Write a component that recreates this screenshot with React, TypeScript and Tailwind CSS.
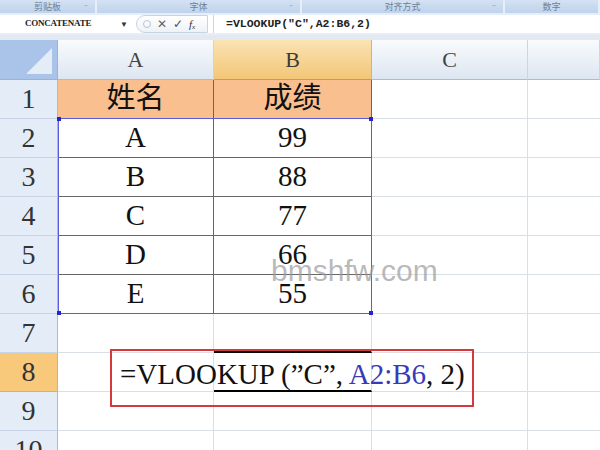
import React from "react";

const serif = { fontFamily: '"Liberation Serif", "Noto Sans CJK SC", serif' };

const rows = [
  { n: "1", a: "姓名", b: "成绩", head: true },
  { n: "2", a: "A", b: "99" },
  { n: "3", a: "B", b: "88" },
  { n: "4", a: "C", b: "77" },
  { n: "5", a: "D", b: "66" },
  { n: "6", a: "E", b: "55" },
  { n: "7" },
  { n: "8", active: true },
  { n: "9" },
  { n: "10" },
];

function RibbonGroups() {
  const groups = [
    { label: "剪贴板", w: "w-[97px]" },
    { label: "字体", w: "w-[205px]" },
    { label: "对齐方式", w: "w-[203px]" },
    { label: "数字", w: "flex-1" },
  ];
  return (
    <div className="flex h-[13px] bg-gradient-to-b from-[#d4e2f3] to-[#bfd3ec]">
      {groups.map((g, i) => (
        <div
          key={i}
          className={`${g.w} relative flex items-center justify-center border-r-2 border-[#e6eef8] text-[9px] leading-none text-[#6d7f99]`}
          style={{ fontFamily: '"Noto Sans CJK SC", sans-serif' }}
        >
          {g.label}
          {i < 3 && <span className="absolute right-[7px] top-[2px] text-[6px] text-[#8ea3bd]">⌐</span>}
        </div>
      ))}
    </div>
  );
}

function FormulaBar() {
  return (
    <div className="flex h-[22px] items-center border-t-2 border-b-2 border-[#e7eef7] bg-white">
      <div className="w-[120px] pl-[25px] text-[9px] font-bold tracking-tight text-[#222]" style={serif}>
        CONCATENATE
      </div>
      <span className="w-[16px] text-[8px] text-[#333]">▼</span>
      <div className="flex h-[18px] w-[72px] items-center gap-[6px] rounded-l-full border border-[#c8d4e2] bg-gradient-to-b from-white to-[#eef2f7] pl-[6px]">
        <span className="h-[8px] w-[8px] rounded-full border border-[#b8c4d2]" />
        <span className="text-[12px] leading-none text-[#5a6470]">✕</span>
        <span className="text-[12px] leading-none text-[#4a5560]">✓</span>
        <span className="text-[11px] italic leading-none text-[#333]" style={serif}>
          f<sub className="text-[7px]">x</sub>
        </span>
      </div>
      <div
        className="ml-[5px] border-l border-[#c8d4e2] pl-[12px] text-[11.5px] font-semibold text-[#222]"
        style={{ fontFamily: '"Liberation Mono", monospace' }}
      >
        =VLOOKUP("C",A2:B6,2)
      </div>
    </div>
  );
}

export default function App() {
  return (
    <div className="relative h-[450px] w-[600px] overflow-hidden bg-white">
      <RibbonGroups />
      <FormulaBar />
      <div className="h-[5px] bg-[#e3e9f1]" />

      {/* sheet grid */}
      <div className="relative grid grid-cols-[58px_156px_158px_156px_1fr] grid-rows-[40px_repeat(10,39px)]" style={serif}>
        {/* corner */}
        <div className="relative border-r border-b border-[#9db3cd] bg-[#a9c4e8]">
          <svg className="absolute bottom-[3px] right-[3px]" width="32" height="30">
            <polygon points="30,2 30,28 4,28" fill="#e4ecf7" />
          </svg>
        </div>
        {["A", "B", "C", ""].map((c) => (
          <div
            key={c || "D"}
            className={`flex items-center justify-center border-r border-b text-[22px] ${
              c === "B"
                ? "border-[#e2b063] border-b-[#c69b52] bg-gradient-to-b from-[#fae3b4] to-[#f3c676] text-[#3b3b3b]"
                : "border-[#c9d6e6] border-b-[#a9bcd3] bg-gradient-to-b from-[#f9fbfd] to-[#dde6f1] text-[#444]"
            }`}
          >
            {c}
          </div>
        ))}

        {rows.map((r) => (
          <React.Fragment key={r.n}>
            <div
              className={`flex items-center justify-center border-r border-b text-[28px] ${
                r.active
                  ? "border-[#e0b060] bg-[#f8c97a] text-[#333]"
                  : "border-[#c6d4e6] border-r-[#a9bcd3] bg-[#e4ecf7] text-[#333]"
              }`}
            >
              {r.n}
            </div>
            <div
              className={`flex items-center justify-center border-r border-b text-[29px] text-[#111] ${
                r.a ? "border-[#666]" : "border-[#dadee5]"
              } ${r.head ? "bg-[#f9bf8f]" : ""}`}
            >
              {r.a}
            </div>
            <div
              className={`flex items-center justify-center border-r border-b text-[29px] text-[#111] ${
                r.b ? "border-[#666]" : r.active ? "border-r-[#dadee5] border-b-black border-b-2" : "border-[#dadee5]"
              } ${r.head ? "bg-[#f9bf8f]" : ""} ${r.n === "7" ? "border-b-black border-b-2" : ""}`}
            >
              {r.b}
            </div>
            <div className="border-r border-b border-[#dadee5]" />
            <div className="border-b border-[#dadee5]" />
          </React.Fragment>
        ))}

        {/* selection marquee around A2:B6 */}
        <div className="pointer-events-none absolute left-[58px] top-[78px] h-[196px] w-[314px] border border-[#5b5bd6]">
          <span className="absolute -left-[2px] -top-[2px] h-[4px] w-[4px] bg-[#2626c8]" />
          <span className="absolute -right-[2px] -top-[2px] h-[4px] w-[4px] bg-[#2626c8]" />
          <span className="absolute -left-[2px] -bottom-[2px] h-[4px] w-[4px] bg-[#2626c8]" />
          <span className="absolute -right-[2px] -bottom-[2px] h-[4px] w-[4px] bg-[#2626c8]" />
        </div>

        {/* annotation box with the formula */}
        <div className="absolute left-[110px] top-[309px] flex h-[58px] w-[364px] items-center border-2 border-[#d23a3e] pb-[8px] pl-[8px] text-[29px] leading-none text-[#111]">
          <span className="scale-y-105">
            =VLOOKUP (”C”, <span className="text-[#3a3ab8]">A2:B6</span>, 2)
          </span>
        </div>
      </div>

      {/* watermark */}
      <div
        className="pointer-events-none absolute left-[271px] top-[256px] text-[30px] leading-none text-[#9a9a9a]/70"
        style={{ fontFamily: '"Liberation Sans", sans-serif' }}
      >
        bmshfw.com
      </div>
    </div>
  );
}
